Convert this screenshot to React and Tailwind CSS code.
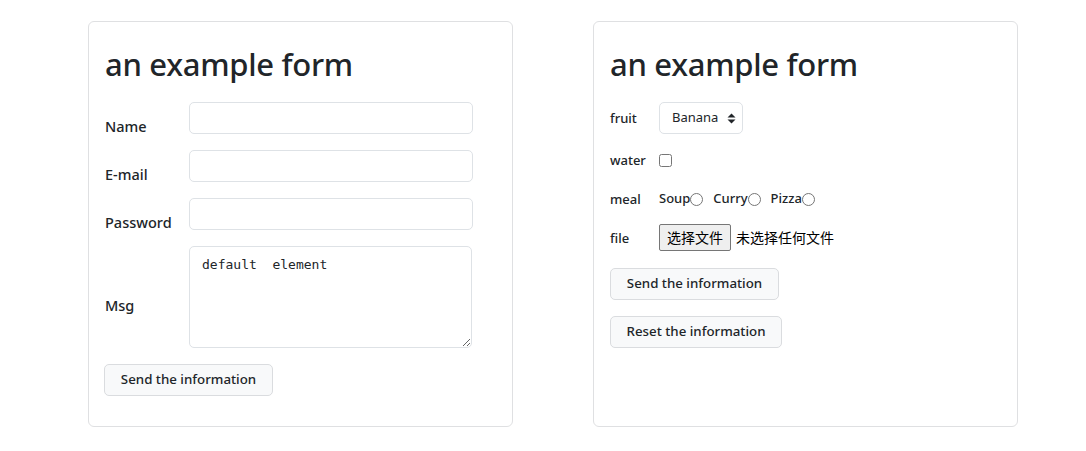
import React from "react";

const font = { fontFamily: '"Noto Sans", "Noto Sans CJK SC", sans-serif' };

function Heading() {
  return (
    <h1 className="text-[31px] leading-[38px] font-medium text-[#212529] tracking-[-0.3px] translate-y-[2px]">
      an example form
    </h1>
  );
}

function Row({ label, children }) {
  return (
    <div className="flex items-center">
      <label className="w-[84px] translate-y-[9px] text-[14.5px] font-medium text-[#212529]">
        {label}
      </label>
      {children}
    </div>
  );
}

function LeftForm() {
  return (
    <div className="w-[425px] h-[406px] border border-[#dfe0e2] rounded-md px-4 pt-[21px]">
      <Heading />
      <form className="mt-[21px] flex flex-col gap-4">
        <Row label="Name">
          <input type="text" className="w-[284px] h-8 border border-[#dee2e6] rounded-[5px] px-3 outline-none" />
        </Row>
        <Row label="E-mail">
          <input type="email" className="w-[284px] h-8 border border-[#dee2e6] rounded-[5px] px-3 outline-none" />
        </Row>
        <Row label="Password">
          <input type="password" className="w-[284px] h-8 border border-[#dee2e6] rounded-[5px] px-3 outline-none" />
        </Row>
        <Row label="Msg">
          <textarea
            defaultValue="default  element"
            className="w-[283px] h-[102px] border border-[#dee2e6] rounded-[5px] px-3 py-[9px] text-[13px] leading-[18px] text-[#212529] outline-none"
            style={{ fontFamily: '"DejaVu Sans Mono", monospace' }}
          />
        </Row>
        <div>
          <button
            type="button"
            className="w-[169px] h-8 -ml-px border border-[#dadcdf] rounded-[5px] bg-[#f8f9fa] text-[13.3px] font-medium text-[#212529]"
          >
            Send the information
          </button>
        </div>
      </form>
    </div>
  );
}

function RLabel({ children }) {
  return (
    <span className="w-[49px] shrink-0 text-[13px] font-medium text-[#212529] translate-y-[1px]">
      {children}
    </span>
  );
}

function Radio({ label }) {
  return (
    <label className="flex items-center text-[13px] font-medium text-[#212529] mr-[10px]">
      {label}
      <input type="radio" name="meal" className="m-0 w-[13px] h-[13px]" />
    </label>
  );
}

function RightForm() {
  return (
    <div className="w-[425px] h-[406px] border border-[#dfe0e2] rounded-md px-4 pt-[21px]">
      <Heading />
      <form className="mt-[21px] flex flex-col gap-4">
        <div className="flex items-center h-8">
          <RLabel>fruit</RLabel>
          <div className="relative w-[84px] h-8 border border-[#dee2e6] rounded-[5px] flex items-center pl-3">
            <span className="text-[13px] text-[#212529]">Banana</span>
            <svg className="absolute right-[6px] top-[10px]" width="9" height="11" viewBox="0 0 9 11">
              <path d="M4.5 0.5 L8.5 4.5 L0.5 4.5 Z" fill="#212529" />
              <path d="M4.5 10.5 L8.5 6.5 L0.5 6.5 Z" fill="#212529" />
            </svg>
          </div>
        </div>
        <div className="flex items-center h-5">
          <RLabel>water</RLabel>
          <input type="checkbox" className="m-0 w-[13px] h-[13px]" />
        </div>
        <div className="flex items-center h-[22px] translate-y-[2px]">
          <RLabel>meal</RLabel>
          <Radio label="Soup" />
          <Radio label="Curry" />
          <Radio label="Pizza" />
        </div>
        <div className="flex items-center h-[27px]">
          <RLabel>file</RLabel>
          <span className="h-[27px] w-[72px] flex items-center justify-center border border-[#767676] rounded-[2px] bg-[#efefef] text-[14px] text-black">
            选择文件
          </span>
          <span className="ml-[5px] text-[14px] text-black">未选择任何文件</span>
        </div>
        <div className="pt-px">
          <button
            type="button"
            className="w-[169px] h-8 border border-[#dadcdf] rounded-[5px] bg-[#f8f9fa] text-[13.3px] font-medium text-[#212529]"
          >
            Send the information
          </button>
        </div>
        <div>
          <button
            type="reset"
            className="w-[172px] h-8 border border-[#dadcdf] rounded-[5px] bg-[#f8f9fa] text-[13.3px] font-medium text-[#212529]"
          >
            Reset the information
          </button>
        </div>
      </form>
    </div>
  );
}

export default function App() {
  return (
    <div className="w-[1086px] h-[451px] bg-white pt-[21px] pl-[88px] flex gap-[80px]" style={font}>
      <LeftForm />
      <RightForm />
    </div>
  );
}
